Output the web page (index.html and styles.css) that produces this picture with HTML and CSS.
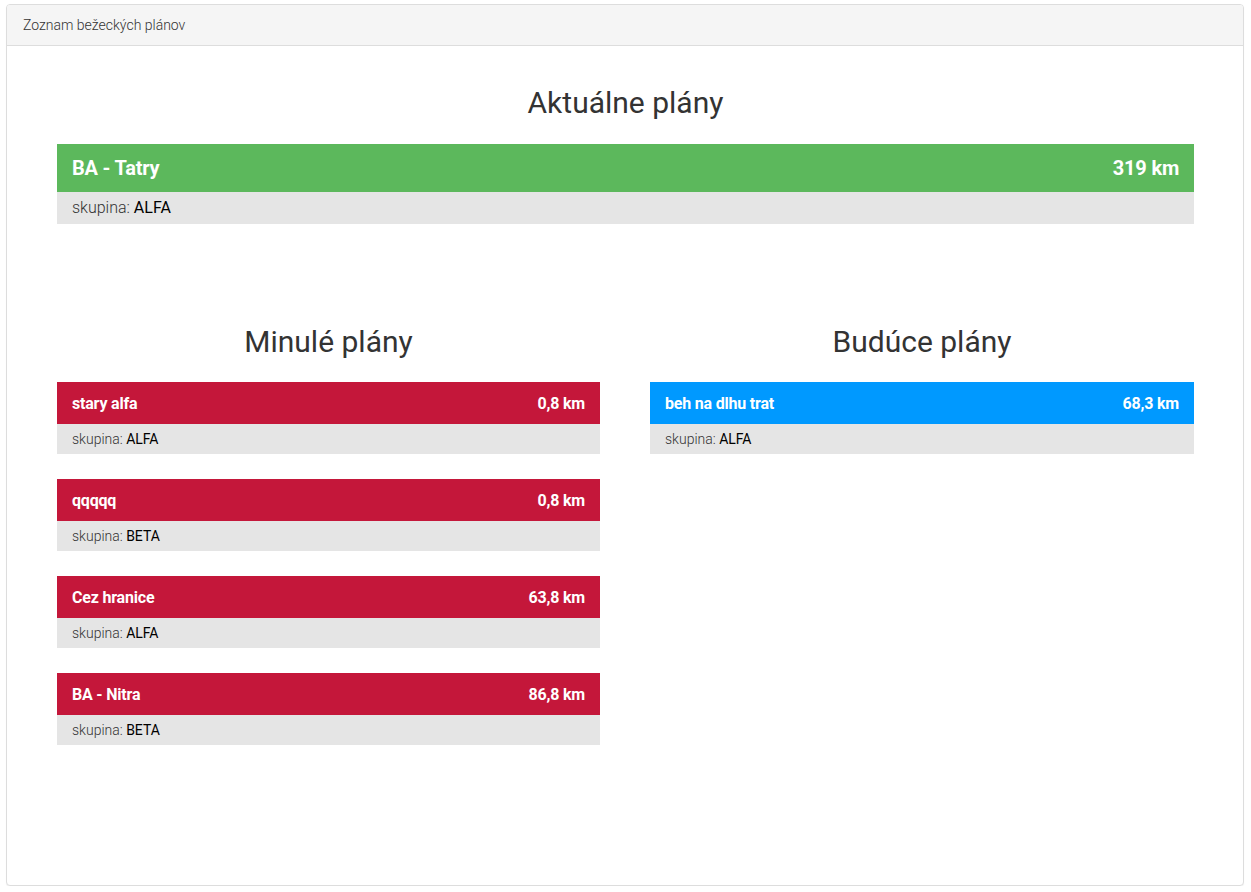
FILE: index.html
```html
<!DOCTYPE html>
<html lang="sk">
<head>
<meta charset="utf-8">
<title>Zoznam bežeckých plánov</title>
<link rel="stylesheet" href="styles.css">
</head>
<body>
<div class="panel">
  <div class="panel-heading">Zoznam bežeckých plánov</div>
  <div class="panel-body">
    <h2 class="section-title first">Aktuálne plány</h2>
    <div class="plan plan-current big">
      <div class="plan-head"><span>BA - Tatry</span><span>319 km</span></div>
      <div class="plan-group">skupina: <b>ALFA</b></div>
    </div>
    <div class="cols">
      <div class="col">
        <h2 class="section-title">Minulé plány</h2>
        <div class="plan plan-past">
          <div class="plan-head"><span>stary alfa</span><span>0,8 km</span></div>
          <div class="plan-group">skupina: <b>ALFA</b></div>
        </div>
        <div class="plan plan-past">
          <div class="plan-head"><span>qqqqq</span><span>0,8 km</span></div>
          <div class="plan-group">skupina: <b>BETA</b></div>
        </div>
        <div class="plan plan-past">
          <div class="plan-head"><span>Cez hranice</span><span>63,8 km</span></div>
          <div class="plan-group">skupina: <b>ALFA</b></div>
        </div>
        <div class="plan plan-past">
          <div class="plan-head"><span>BA - Nitra</span><span>86,8 km</span></div>
          <div class="plan-group">skupina: <b>BETA</b></div>
        </div>
      </div>
      <div class="col">
        <h2 class="section-title">Budúce plány</h2>
        <div class="plan plan-future">
          <div class="plan-head"><span>beh na dlhu trat</span><span>68,3 km</span></div>
          <div class="plan-group">skupina: <b>ALFA</b></div>
        </div>
      </div>
    </div>
  </div>
</div>
</body>
</html>
```
FILE: styles.css
```css
* { box-sizing: border-box; }
html, body { margin: 0; padding: 0; background: #fff; }
body {
  font-family: Roboto, "Liberation Sans", Arial, sans-serif;
  color: #333;
  padding: 4px 7px 0 6px;
}
.panel {
  height: 882px;
  border: 1px solid #ddd;
  border-radius: 4px;
  background: #fff;
  box-shadow: 0 1px 1px rgba(0,0,0,0.05);
}
.panel-heading {
  height: 41px;
  background: #f5f5f5;
  border-bottom: 1px solid #ddd;
  border-radius: 3px 3px 0 0;
  padding: 0 16px;
  font-size: 14px;
  font-weight: 300;
  line-height: 40px;
  color: #333;
}
.panel-body {
  padding: 0 49px 0 50px;
}
.section-title {
  margin: 76px 0 24px;
  text-align: center;
  font-size: 30px;
  font-weight: 400;
  line-height: 33px;
  color: #333;
}
.section-title.first {
  margin-top: 40px;
  margin-bottom: 25px;
}
.plan { margin-bottom: 25px; }
.plan-head {
  display: flex;
  justify-content: space-between;
  align-items: center;
  height: 42px;
  padding: 0 15px;
  color: #fff;
  font-size: 16px;
  font-weight: 700;
  letter-spacing: -0.2px;
}
.plan-group {
  height: 30px;
  line-height: 30px;
  padding: 0 15px;
  background: #e5e5e5;
  font-size: 14px;
  font-weight: 300;
  color: #333;
}
.plan-group b { font-weight: 400; color: #000; }
.big .plan-head { height: 48px; font-size: 20px; }
.big .plan-group { height: 32px; line-height: 32px; font-size: 16px; }
.plan-current .plan-head { background: #5cb85c; }
.plan-past .plan-head { background: #c4173a; }
.plan-future .plan-head { background: #0099ff; }
.cols {
  display: grid;
  grid-template-columns: 543px 544px;
  column-gap: 50px;
}
```
